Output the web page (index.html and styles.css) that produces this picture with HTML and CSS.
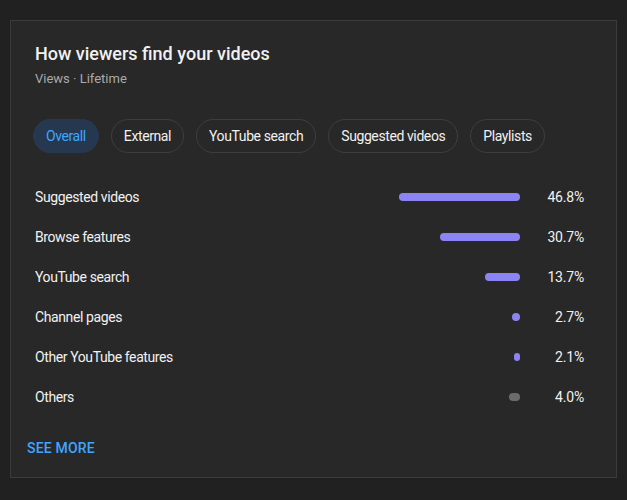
FILE: index.html
```html
<!DOCTYPE html>
<html>
<head>
<meta charset="utf-8">
<link rel="stylesheet" href="styles.css">
</head>
<body>
<div class="card">
  <h2 class="title">How viewers find your videos</h2>
  <div class="subtitle">Views · Lifetime</div>
  <div class="chips">
    <span class="chip active">Overall</span>
    <span class="chip">External</span>
    <span class="chip">YouTube search</span>
    <span class="chip">Suggested videos</span>
    <span class="chip">Playlists</span>
  </div>
  <div class="rows">
    <div class="row"><span class="label">Suggested videos</span><span class="track"><span class="bar" style="width:121px"></span></span><span class="pct">46.8%</span></div>
    <div class="row"><span class="label">Browse features</span><span class="track"><span class="bar" style="width:80px"></span></span><span class="pct">30.7%</span></div>
    <div class="row"><span class="label">YouTube search</span><span class="track"><span class="bar" style="width:35px"></span></span><span class="pct">13.7%</span></div>
    <div class="row"><span class="label">Channel pages</span><span class="track"><span class="bar" style="width:8px"></span></span><span class="pct">2.7%</span></div>
    <div class="row"><span class="label">Other YouTube features</span><span class="track"><span class="bar" style="width:6px"></span></span><span class="pct">2.1%</span></div>
    <div class="row"><span class="label">Others</span><span class="track"><span class="bar grey" style="width:11px"></span></span><span class="pct">4.0%</span></div>
  </div>
  <button class="more">SEE MORE</button>
</div>
</body>
</html>
```
FILE: styles.css
```css
html, body {
  margin: 0;
  padding: 0;
  background: #212121;
  font-family: Roboto, "Noto Sans", sans-serif;
  color: #f1f1f1;
}
.card {
  margin: 20px 0 0 10px;
  width: 605px;
  height: 456px;
  box-sizing: content-box;
  border: 1px solid #3b3b3b;
  background: #282828;
  padding: 0;
  display: flex;
  flex-direction: column;
}
.title {
  margin: 21px 0 0 24px;
  font-size: 18px;
  line-height: 24px;
  font-weight: 500;
  color: #f1f1f1;
}
.subtitle {
  margin: 3px 0 0 24px;
  font-size: 13px;
  line-height: 20px;
  color: #aaaaaa;
}
.chips {
  display: flex;
  gap: 12px;
  margin: 30px 0 0 22px;
}
.chip {
  height: 34px;
  box-sizing: border-box;
  padding: 0 12px;
  border: 1px solid #3e3e3e;
  border-radius: 17px;
  font-size: 14px;
  letter-spacing: -0.4px;
  line-height: 32px;
  color: #f1f1f1;
  background: #282828;
}
.chip.active {
  background: #263850;
  border-color: #263850;
  color: #3ea6ff;
}
.rows {
  margin: 24px 32px 0 24px;
  display: flex;
  flex-direction: column;
}
.row {
  display: flex;
  align-items: center;
  height: 40px;
  font-size: 14px;
}
.label {
  flex: 1;
  color: #f1f1f1;
  letter-spacing: -0.4px;
}
.track {
  display: flex;
  justify-content: flex-end;
  width: 200px;
}
.bar {
  height: 8px;
  border-radius: 4px;
  background: #8d84f3;
}
.bar.grey {
  background: #6b6b6b;
}
.pct {
  width: 64px;
  text-align: right;
  color: #f1f1f1;
  letter-spacing: -0.2px;
}
.more {
  align-self: flex-start;
  margin: 13px 0 0 8px;
  height: 36px;
  padding: 0 8px;
  background: none;
  border: none;
  font-family: Roboto, sans-serif;
  font-size: 14px;
  font-weight: 500;
  color: #3ea6ff;
  letter-spacing: 0.2px;
}
```
